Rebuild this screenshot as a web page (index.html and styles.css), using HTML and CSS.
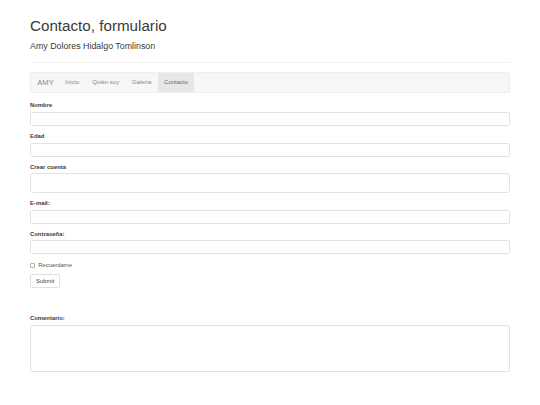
FILE: index.html
```html
<!DOCTYPE html>
<html lang="es">
<head>
<meta charset="utf-8">
<title>Contacto, formulario</title>
<link rel="stylesheet" href="styles.css">
</head>
<body>
<div class="container">
  <header class="page-header">
    <h1 class="title">Contacto, formulario</h1>
    <p class="lead">Amy Dolores Hidalgo Tomlinson</p>
  </header>

  <nav class="navbar">
    <a class="brand" href="#">AMY</a>
    <ul class="nav">
      <li><a href="#">Inicio</a></li>
      <li><a href="#">Quién soy</a></li>
      <li><a href="#">Galeria</a></li>
      <li class="active"><a href="#">Contacto</a></li>
    </ul>
  </nav>

  <form class="form">
    <div class="group">
      <label class="label" for="nombre">Nombre</label>
      <input class="control" id="nombre" type="text">
    </div>
    <div class="group">
      <label class="label" for="edad">Edad</label>
      <input class="control" id="edad" type="text">
    </div>
    <div class="group">
      <label class="label" for="cuenta">Crear cuenta</label>
      <input class="control control-lg" id="cuenta" type="text">
    </div>
    <div class="group">
      <label class="label" for="email">E-mail:</label>
      <input class="control" id="email" type="email">
    </div>
    <div class="group">
      <label class="label" for="pwd">Contraseña:</label>
      <input class="control" id="pwd" type="password">
    </div>
    <div class="check">
      <label class="check-label"><input class="check-box" type="checkbox"> Recuerdame</label>
    </div>
    <button class="btn" type="submit">Submit</button>
  </form>

  <div class="comment">
    <label class="label" for="comentario">Comentario:</label>
    <div class="area-wrap">
      <textarea class="control area" id="comentario" rows="5"></textarea>
      <span class="grip"></span>
    </div>
  </div>
</div>
</body>
</html>
```

FILE: styles.css
```css
* { box-sizing: border-box; }

html, body {
  margin: 0;
  padding: 0;
  background: #fff;
}

body {
  font-family: "Liberation Sans", Arial, Helvetica, sans-serif;
  color: #333;
  font-size: 5.9px;
  line-height: 8.4px;
}

.container {
  width: 480px;
  margin: 0 auto;
}

.page-header {
  padding-top: 17.5px;
  padding-bottom: 10.1px;
  border-bottom: 1px solid #f0f0f0;
  margin-bottom: 8.7px;
}

.title {
  margin: 0;
  font-size: 15.2px;
  line-height: 16.7px;
  font-weight: 400;
  color: #3a3a3a;
}

.lead {
  margin: 5.3px 0 0;
  font-size: 8.86px;
  line-height: 12.4px;
  font-weight: 400;
  color: #3a3a3a;
}

.navbar {
  display: flex;
  height: 21.6px;
  background: #f7f7f7;
  border: 1px solid #eeeeee;
  border-radius: 1.7px;
  margin-bottom: 8.2px;
}

.brand {
  display: block;
  padding: 0 5.2px 0 6.3px;
  font-size: 7.6px;
  line-height: 19.6px;
  font-weight: 400;
  color: #888;
  text-decoration: none;
}

.nav {
  display: flex;
  list-style: none;
  margin: 0;
  padding: 0;
}

.nav a {
  display: block;
  padding: 0 6.4px;
  font-size: 6px;
  line-height: 19.6px;
  color: #888;
  text-decoration: none;
}

.nav .active a {
  background: #e7e7e7;
  color: #666;
}

.form {
  margin: 0;
}

.group {
  margin-bottom: 6.4px;
}

.label {
  display: block;
  font-weight: bold;
  font-size: 5.9px;
  line-height: 8.4px;
  margin-bottom: 2px;
  color: #3a3a3a;
}

.control {
  display: block;
  width: 100%;
  height: 14px;
  margin: 0;
  padding: 0 5px;
  border: 1px solid #e2e2e2;
  border-radius: 1.7px;
  background: #fff;
  font-family: inherit;
  font-size: 5.9px;
  color: #555;
  outline: none;
}

.control-lg {
  height: 19.4px;
  border-radius: 2.5px;
}

.check {
  margin-bottom: 4.9px;
}

.check-label {
  display: flex;
  align-items: center;
  height: 8.4px;
  font-size: 5.9px;
  color: #555;
}

.check-box {
  -webkit-appearance: none;
  appearance: none;
  width: 4.7px;
  height: 4.7px;
  margin: 1.4px 3.5px 0 0;
  border: 1px solid #b0b0b0;
  border-radius: 1px;
  background: #fff;
  flex: none;
}

.btn {
  display: block;
  height: 13.7px;
  margin: 0;
  padding: 0 5px;
  border: 1px solid #e0e0e0;
  border-radius: 1.7px;
  background: #fff;
  font-family: inherit;
  font-size: 5.9px;
  line-height: 8.4px;
  color: #444;
}

.comment {
  margin-top: 26.6px;
}

.area-wrap {
  position: relative;
}

.area {
  height: 46.7px;
  resize: none;
}

.grip {
  position: absolute;
  right: 1.5px;
  bottom: 1.5px;
  width: 3.5px;
  height: 3.5px;
  background: linear-gradient(135deg, transparent 45%, #bbb 45%, #bbb 55%, transparent 55%, transparent 75%, #bbb 75%, #bbb 85%, transparent 85%);
}
```
